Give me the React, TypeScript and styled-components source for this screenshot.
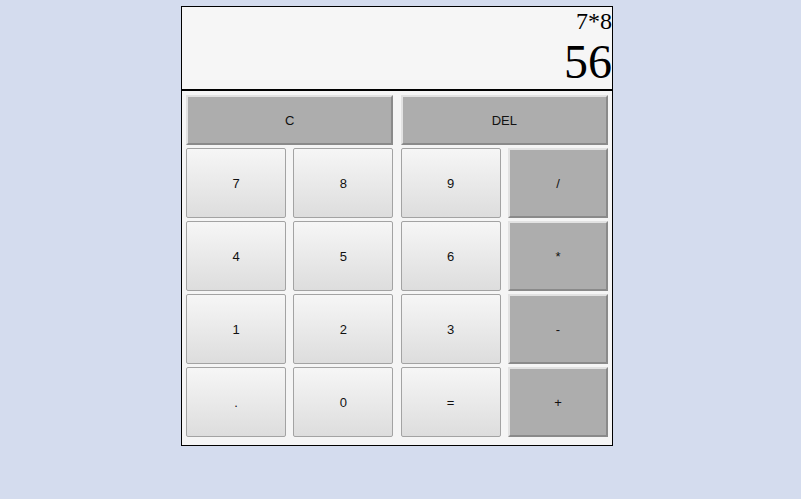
import React from "react";
import styled, { createGlobalStyle, css } from "styled-components";

const Global = createGlobalStyle`
  html, body { margin: 0; padding: 0; }
  body { background: #d4dcee; font-family: "Liberation Sans", Arial, sans-serif; }
`;

const Page = styled.div`
  display: flex;
  justify-content: center;
  padding-top: 6px;
  padding-right: 7px;
`;

const Calc = styled.div`
  width: 430px;
  border: 1px solid #000;
  background: #f5f5f5;
`;

const Display = styled.div`
  height: 82px;
  border-bottom: 2px solid #000;
  background: #f6f6f6;
  display: flex;
  flex-direction: column;
  align-items: flex-end;
  font-family: "Liberation Serif", "Times New Roman", serif;
  color: #000;
`;

const Expr = styled.div`
  font-size: 24px;
  line-height: 28px;
  margin-top: 0px;
`;

const Result = styled.div`
  font-size: 48px;
  line-height: 48px;
  margin-top: 3px;
`;

const Pad = styled.div`
  display: grid;
  grid-template-columns: repeat(4, 100px);
  grid-template-rows: 50px repeat(4, 70px);
  column-gap: 7.33px;
  row-gap: 3px;
  padding: 4px 4px 8px 4px;
`;

const Key = styled.button<{ $op?: boolean; $span?: number }>`
  font-family: "Liberation Sans", Arial, sans-serif;
  font-size: 13px;
  color: #111;
  margin: 0;
  padding: 0;
  box-sizing: border-box;
  grid-column: span ${(p) => p.$span ?? 1};
  ${(p) =>
    p.$op
      ? css`
          background: #adadad;
          border: 2px solid;
          border-color: #e2e2e2 #8a8a8a #8a8a8a #e2e2e2;
          border-radius: 0;
        `
      : css`
          background: linear-gradient(#f6f6f6, #dddddd);
          border: 1px solid #a3a3a3;
          border-radius: 2px;
        `}
`;

const rows: { label: string; op?: boolean }[][] = [
  [{ label: "7" }, { label: "8" }, { label: "9" }, { label: "/", op: true }],
  [{ label: "4" }, { label: "5" }, { label: "6" }, { label: "*", op: true }],
  [{ label: "1" }, { label: "2" }, { label: "3" }, { label: "-", op: true }],
  [{ label: "." }, { label: "0" }, { label: "=" }, { label: "+", op: true }],
];

export default function App() {
  return (
    <>
      <Global />
      <Page>
        <Calc>
          <Display>
            <Expr>7*8</Expr>
            <Result>56</Result>
          </Display>
          <Pad>
            <Key $op $span={2}>C</Key>
            <Key $op $span={2}>DEL</Key>
            {rows.flat().map((k) => (
              <Key key={k.label} $op={k.op}>
                {k.label}
              </Key>
            ))}
          </Pad>
        </Calc>
      </Page>
    </>
  );
}
